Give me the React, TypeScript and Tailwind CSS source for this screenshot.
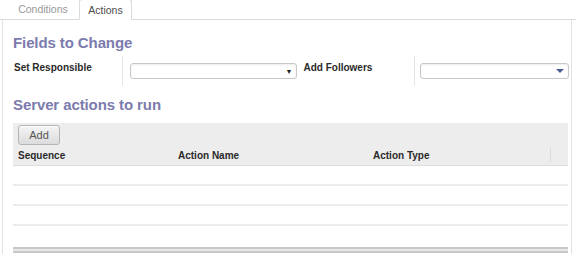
const FONT = { fontFamily: '"Liberation Sans", Arial, sans-serif' };

const Select = ({ arrow }: { arrow: 'black' | 'blue' }) => (
  <div className="flex h-[16px] flex-1 items-center justify-end rounded-[3px] border border-[#c8c8c8] bg-white pr-[4px] shadow-[inset_0_1px_2px_rgba(0,0,0,0.08)]">
    {arrow === 'black' ? (
      <span className="text-[7px] leading-none text-[#222]">▼</span>
    ) : (
      <span className="h-0 w-0 border-x-[4px] border-t-[4px] border-x-transparent border-t-[#4a5e9a]" />
    )}
  </div>
);

const App = () => {
  const rows = [0, 1, 2];

  return (
    <div className="h-[254px] w-[576px] overflow-hidden bg-white text-[#333]" style={FONT}>
      {/* tabs */}
      <div className="flex h-[20px] items-end border-b border-[#dcdcdc] pl-[8px]">
        <div className="flex h-[20px] w-[70px] items-center justify-center pt-[2px] text-[10.5px] text-[#999]">
          Conditions
        </div>
        <div className="-mb-px ml-[1px] flex h-[21px] w-[53px] items-center justify-center rounded-t-[3px] border border-b-white border-[#dcdcdc] bg-white pt-[2px] text-[10.5px] text-[#4c4c4c]">
          Actions
        </div>
      </div>

      <div className="ml-[2px] mr-[4px] h-[234px] border-l border-r border-[#e2e2e2] pl-[10px] pr-[2px]">
        <h2 className="pt-[13px] text-[15px] font-bold leading-[20px] tracking-[-0.1px] text-[#7c7bad]">Fields to Change</h2>

        <div className="mt-[9px] flex h-[18px] items-center">
          <div className="flex h-[30px] w-[110px] items-center border-r border-[#e6e6e6] pl-[1px] text-[10px] font-bold text-[#2a2a2a]">
            <span className="-mt-[8px]">Set Responsible</span>
          </div>
          <div className="flex w-[175px] pl-[7px]">
            <Select arrow="black" />
          </div>
          <div className="flex h-[30px] w-[118px] items-center border-r border-[#e6e6e6] pl-[6px] text-[10px] font-bold text-[#2a2a2a]">
            <span className="-mt-[8px]">Add Followers</span>
          </div>
          <div className="flex w-[154px] pl-[5px]">
            <Select arrow="blue" />
          </div>
        </div>

        <h2 className="mt-[15px] text-[15px] font-bold leading-[20px] tracking-[-0.1px] text-[#7c7bad]">Server actions to run</h2>

        {/* table */}
        <div className="mt-[8px] mr-[1px]">
          <div className="bg-[#ededed] pt-[2px] shadow-[0_1px_0_#dcdcdc]">
            <div className="pl-[5px]">
              <button className="flex h-[20px] w-[42px] items-center justify-center rounded-[3px] border border-[#b4b4b4] bg-gradient-to-b from-[#f4f4f4] to-[#dcdcdc] text-[11px] text-[#555] shadow-[inset_0_1px_0_#fff]">
                Add
              </button>
            </div>
            <div className="flex h-[20px] items-center text-[10px] font-bold text-[#2a2a2a]">
              <div className="w-[165px] pl-[5px]">Sequence</div>
              <div className="w-[195px]">Action Name</div>
              <div className="flex-1">Action Type</div>
              <div className="h-[14px] w-[18px] border-l border-[#dadada]" />
            </div>
          </div>
          <div className="pt-[1px]">
            {rows.map((r) => (
              <div key={r} className="h-[20px] border-b-2 border-[#ececec]" />
            ))}
          </div>
          <div className="mt-[21px] h-[6px] border-y-2 border-[#c8c8c8] bg-[#e8e8e8]" />
        </div>
      </div>
    </div>
  );
};

export default App;
